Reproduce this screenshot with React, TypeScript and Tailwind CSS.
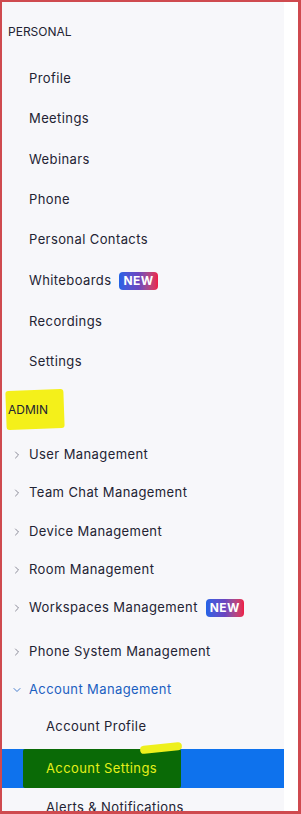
import React from 'react';
import { ChevronRight, ChevronDown } from 'lucide-react';

const personal = [
  { label: 'Profile', h: 'h-[40px]' },
  { label: 'Meetings', h: 'h-[40px]' },
  { label: 'Webinars', h: 'h-[41px]' },
  { label: 'Phone', h: 'h-[40px]' },
  { label: 'Personal Contacts', h: 'h-[40px]' },
  { label: 'Whiteboards', h: 'h-[41px]', isNew: true },
  { label: 'Recordings', h: 'h-[41px]' },
  { label: 'Settings', h: 'h-[40px]' },
];

const admin = [
  { label: 'User Management', h: 'h-[38px]' },
  { label: 'Team Chat Management', h: 'h-[38px]' },
  { label: 'Device Management', h: 'h-[39px]' },
  { label: 'Room Management', h: 'h-[38px]' },
  { label: 'Workspaces Management', h: 'h-[38px]', isNew: true },
  { label: 'Phone System Management', h: 'h-[38px] mt-[6px]' },
];

function NewBadge() {
  return (
    <span className="ml-2 inline-flex h-[18px] items-center rounded-[4px] bg-gradient-to-r from-[#1f63e6] via-[#6a45c0] to-[#ee1844] px-[4px] text-[12px] font-bold leading-none text-white">
      NEW
    </span>
  );
}

export default function App() {
  return (
    <div
      className="h-[814px] w-[301px] overflow-hidden border-t-2 border-r-[3px] border-b-[3px] border-l-2 border-[#cf4a4f] bg-white"
      style={{ fontFamily: 'Inter, "Noto Sans", sans-serif' }}
    >
      <div className="flex h-full">
        <nav className="w-[282px] bg-[#f7f7fa] text-[13px] tracking-[0.4px] text-[#232333]">
          {/* Personal */}
          <div className="mt-[10px] flex h-[40px] items-center pl-[6px] text-[12px] tracking-normal">PERSONAL</div>
          <div className="mt-[7px]">
            {personal.map((it) => (
              <div key={it.label} className={`flex items-center pl-[27px] ${it.h}`}>
                <span>{it.label}</span>
                {it.isNew && <NewBadge />}
              </div>
            ))}
          </div>

          {/* Admin */}
          <div className="relative mt-[8px] flex h-[40px] items-center pl-[6px] text-[12px] tracking-normal">
            <span className="absolute left-[4px] top-[0px] h-[39px] w-[58px] -rotate-2 rounded-[3px] bg-[#f4f01a]" />
            <span className="relative">ADMIN</span>
          </div>
          <div className="mt-[6px]">
            {admin.map((it) => (
              <div key={it.label} className={`flex items-center pl-[9px] ${it.h}`}>
                <ChevronRight className="h-[12px] w-[12px] text-[#6e6e7e]" strokeWidth={1.6} />
                <span className="ml-[6px]">{it.label}</span>
                {it.isNew && <NewBadge />}
              </div>
            ))}
            <div className="flex h-[38px] items-center pl-[9px] text-[#1b5fc1]">
              <ChevronDown className="h-[12px] w-[12px]" strokeWidth={1.6} />
              <span className="ml-[6px]">Account Management</span>
            </div>
            <div className="flex h-[36px] items-center pl-[44px]">Account Profile</div>
            <div className="relative mt-[4px] flex h-[39px] items-center bg-[#0e72ed] pl-[44px]">
              <span className="absolute left-[21px] top-0 h-[39px] w-[158px] rounded-[2px] bg-[#0a6a06]" />
              <span className="absolute left-[138px] top-[-5px] h-[8px] w-[42px] -rotate-6 rounded-full bg-[#eef01c]" />
              <span className="relative text-[#e4f01a]">Account Settings</span>
            </div>
            <div className="flex h-[40px] items-center pl-[44px]">Alerts &amp; Notifications</div>
          </div>
        </nav>
        <div className="flex-1 bg-white" />
      </div>
    </div>
  );
}
